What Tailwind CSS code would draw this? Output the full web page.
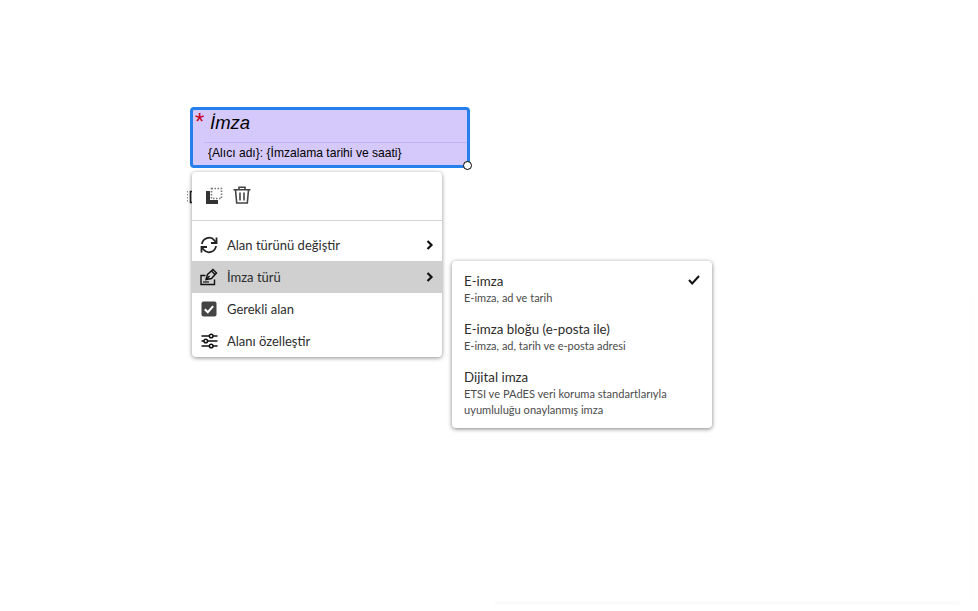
<!DOCTYPE html>
<html lang="en">
<head>
<meta charset="UTF-8">
<script src="https://cdn.jsdelivr.net/npm/@tailwindcss/browser@4"></script>
<title>İmza</title>
</head>
<body class="bg-white">
<div class="relative w-[978px] h-[611px] overflow-hidden font-['Lato','Noto_Sans',sans-serif] text-[#2c2c2c]">

  <!-- faint page edge -->
  <div class="absolute left-[495px] top-[602px] w-[465px] h-[2px] bg-[#f7f7f7] blur-[1px]"></div>
  <div class="absolute left-[972px] top-[300px] w-[1px] h-[300px] bg-[#fcfcfc]"></div>

  <!-- signature field -->
  <div class="absolute left-[190px] top-[107px] w-[280px] h-[61px] bg-[#d5c9fb] border-[3px] border-[#2680eb] rounded-[4px] font-['Liberation_Sans',sans-serif] text-black">
    <span class="absolute left-[2px] top-[0px] text-[24px] leading-[24px] text-[#c8001a]">*</span>
    <div class="ml-[17px] h-[32px] text-[18.5px] leading-[25px] italic">İmza</div>
    <div class="ml-[11px] border-t border-[#c2b3f5] pl-[4px] text-[12.1px] leading-[20px]">{Alıcı adı}: {İmzalama tarihi ve saati}</div>
  </div>
  <div class="absolute left-[463px] top-[161px] w-[9px] h-[9px] rounded-full bg-white border-[1.5px] border-black"></div>

  <!-- bit of the field tool behind the menu -->
  <svg class="absolute left-[185px] top-[188px]" width="8" height="18" viewBox="0 0 8 18" fill="none" stroke="#222">
    <path d="M2.5 3v12" stroke-dasharray="1.5 1.5" stroke="#888"/>
    <path d="M8 3.5H5.5v11H8" stroke-width="1.6"/>
  </svg>

  <!-- context menu -->
  <div class="absolute left-[192px] top-[172px] w-[250px] h-[185px] bg-white rounded-[4px] shadow-[0_1px_4px_rgba(0,0,0,0.45)]">
    <div class="h-[49px] border-b border-[#d4d4d4] flex items-start gap-[10px] pl-[13px] pt-[14px]">
      <svg width="18" height="18" viewBox="0 0 18 18">
        <path d="M1 5h4v9h8v4H1z" fill="#333"/>
        <rect x="6.5" y="2.5" width="10" height="10" fill="none" stroke="#777" stroke-width="1.6" stroke-dasharray="1.5 1.5"/>
      </svg>
      <svg width="18" height="18" viewBox="0 0 18 18" fill="none" stroke="#444" stroke-width="1.6">
        <path d="M0.5 3.8h17M6 3.5V1.2h6v2.3M2.5 4l1.2 13h10.6L15.5 4M7 6.5v8M11 6.5v8"/>
      </svg>
    </div>
    <div class="pt-[8px] text-[13px]">
      <div class="h-[32px] flex items-center">
        <svg class="ml-[8px] mr-[9px]" width="18" height="18" viewBox="0 0 18 18" fill="none" stroke="#222" stroke-width="1.8">
          <path d="M2 8a7 7 0 0 1 12.5-3.5L16 6.5"/>
          <path d="M16.5 1.5v5.5h-5.5" fill="none"/>
          <path d="M16 10a7 7 0 0 1-12.5 3.5L2 11.5"/>
          <path d="M1.5 16.5V11h5.5"/>
        </svg>
        <span class="flex-1 pt-[2px]">Alan türünü değiştir</span>
        <svg class="mr-[8px]" width="8" height="10" viewBox="0 0 8 10" fill="none" stroke="#111" stroke-width="2.2"><path d="M1.5 1l4 4-4 4"/></svg>
      </div>
      <div class="h-[32px] flex items-center bg-[#d0d0d0]">
        <svg class="ml-[8px] mr-[9px]" width="18" height="18" viewBox="0 0 18 18" fill="none" stroke="#111" stroke-width="1.4">
          <path d="M5.5 7.5H1v9h13.5v-5"/>
          <path d="M6 11.5l1.5-5L13 1.5l3.5 3.5-5 5.5z"/>
          <path d="M6 11.5l3.5-3.5M11.5 3l3.5 3.5"/>
          <path d="M3 14h6" stroke-width="1.2"/>
        </svg>
        <span class="flex-1 pt-[2px]">İmza türü</span>
        <svg class="mr-[8px]" width="8" height="10" viewBox="0 0 8 10" fill="none" stroke="#111" stroke-width="2.2"><path d="M1.5 1l4 4-4 4"/></svg>
      </div>
      <div class="h-[32px] flex items-center">
        <svg class="ml-[9px] mr-[10px]" width="16" height="16" viewBox="0 0 16 16">
          <rect x="0.5" y="0.5" width="15" height="15" rx="2" fill="#444"/>
          <path d="M3.8 8.2l3 3 5.4-6" fill="none" stroke="#fff" stroke-width="2"/>
        </svg>
        <span class="flex-1 pt-[2px]">Gerekli alan</span>
      </div>
      <div class="h-[32px] flex items-center">
        <svg class="ml-[9px] mr-[9px]" width="17" height="16" viewBox="0 0 17 16" fill="none" stroke="#111" stroke-width="1.5">
          <path d="M0.5 3h8M12 3h4.5M0.5 8h2.5M6.5 8h10M0.5 13h8M12 13h4.5"/>
          <circle cx="10.2" cy="3" r="1.8"/>
          <circle cx="4.8" cy="8" r="1.8"/>
          <circle cx="10.2" cy="13" r="1.8"/>
        </svg>
        <span class="flex-1 pt-[2px]">Alanı özelleştir</span>
      </div>
    </div>
  </div>

  <!-- signature type submenu -->
  <div class="absolute left-[452px] top-[261px] w-[260px] h-[167px] bg-white rounded-[4px] shadow-[0_1px_4px_rgba(0,0,0,0.5)] px-[12px] pt-[11px]">
    <div class="h-[48px] relative">
      <div class="text-[13.3px] leading-[18px]">E-imza</div>
      <div class="text-[11px] leading-[16px] text-[#4b4b4b]">E-imza, ad ve tarih</div>
      <svg class="absolute right-0 top-[3px]" width="12" height="10" viewBox="0 0 12 10" fill="none" stroke="#111" stroke-width="2"><path d="M1 5l3.2 3.5L11 1"/></svg>
    </div>
    <div class="h-[48px]">
      <div class="text-[13.3px] leading-[18px]">E-imza bloğu (e-posta ile)</div>
      <div class="text-[11px] leading-[16px] text-[#4b4b4b]">E-imza, ad, tarih ve e-posta adresi</div>
    </div>
    <div>
      <div class="text-[13.3px] leading-[18px]">Dijital imza</div>
      <div class="text-[11.1px] leading-[16px] text-[#4b4b4b]">ETSI ve PAdES veri koruma standartlarıyla<br>uyumluluğu onaylanmış imza</div>
    </div>
  </div>
</div>
</body>
</html>
